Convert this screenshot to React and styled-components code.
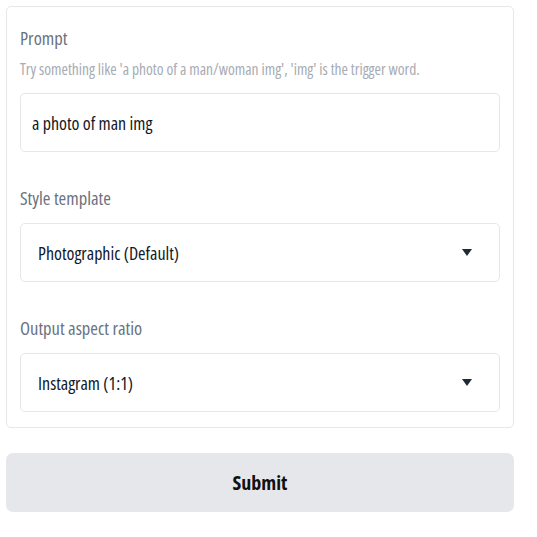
import React from "react";
import styled, { createGlobalStyle } from "styled-components";

const Global = createGlobalStyle`
  html, body {
    margin: 0;
    padding: 0;
    background: #ffffff;
  }
  body {
    font-family: "Open Sans", Lato, sans-serif;
    font-stretch: 78%;
  }
`;

const Page = styled.div`
  width: 508px;
  padding: 6px 0 0 6px;
  display: flex;
  flex-direction: column;
  gap: 25px;
`;

const Card = styled.div`
  border: 1px solid #e5e7eb;
  border-radius: 5px;
  padding: 14px 13px 15px 13px;
  display: flex;
  flex-direction: column;
`;

const Field = styled.div`
  display: flex;
  flex-direction: column;
  margin-top: ${(p) => p.$top || 0}px;
`;

const Label = styled.div`
  font-size: 18.5px;
  color: #6b7280;
  line-height: 34px;
`;

const Hint = styled.div`
  font-size: 15.5px;
  color: #a7abb3;
  line-height: 20px;
  margin-top: 4px;
  margin-bottom: 14px;
`;

const Box = styled.div`
  height: 57px;
  border: 1px solid #e5e7eb;
  border-radius: 5px;
  display: flex;
  align-items: center;
  justify-content: space-between;
  padding: 0 ${(p) => (p.$select ? "27px 0 17px" : "0 0 11px")};
  font-size: 18px;
  color: #111827;
  margin-top: ${(p) => (p.$select ? 8 : 0)}px;
`;

const Caret = styled.span`
  width: 0;
  height: 0;
  border-left: 5px solid transparent;
  border-right: 5px solid transparent;
  border-top: 7px solid #1f2937;
`;

const Submit = styled.button`
  height: 59px;
  border: none;
  border-radius: 7px;
  background: #e5e7eb;
  font-family: inherit;
  font-stretch: inherit;
  font-weight: 700;
  font-size: 20px;
  color: #111;
`;

export default function App() {
  return (
    <>
      <Global />
      <Page>
        <Card>
          <Field>
            <Label>Prompt</Label>
            <Hint>Try something like 'a photo of a man/woman img', 'img' is the trigger word.</Hint>
            <Box>a photo of man img</Box>
          </Field>
          <Field $top={29}>
            <Label>Style template</Label>
            <Box $select>
              Photographic (Default)
              <Caret />
            </Box>
          </Field>
          <Field $top={29}>
            <Label>Output aspect ratio</Label>
            <Box $select>
              Instagram (1:1)
              <Caret />
            </Box>
          </Field>
        </Card>
        <Submit>Submit</Submit>
      </Page>
    </>
  );
}
